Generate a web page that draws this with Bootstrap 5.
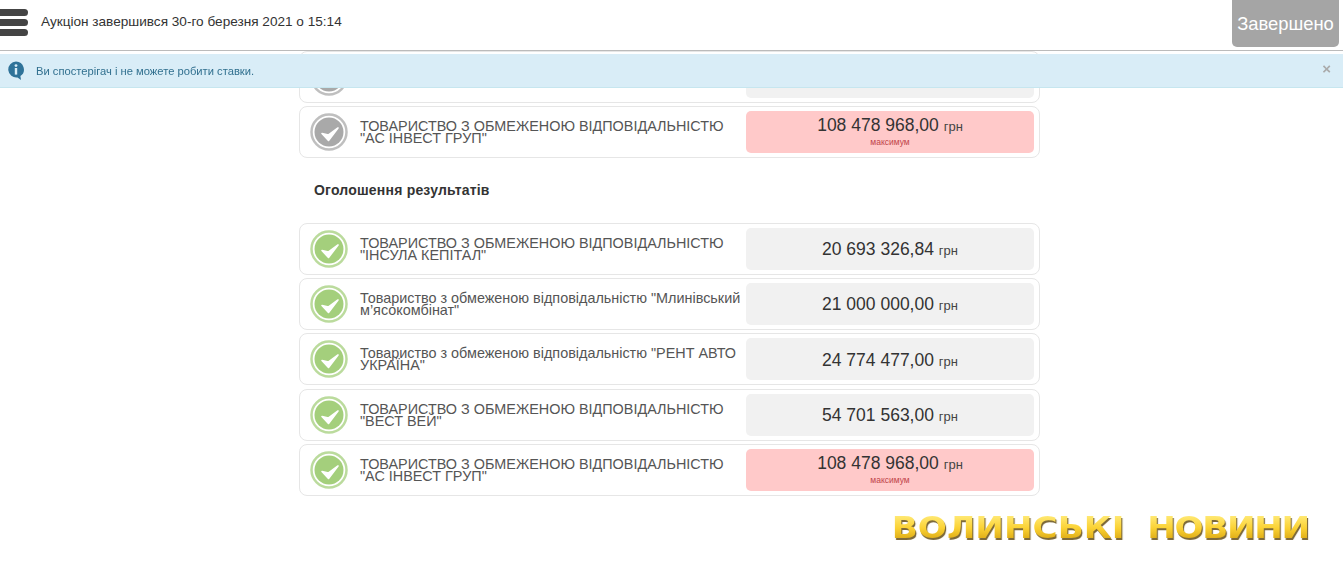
<!DOCTYPE html>
<html lang="uk">
<head>
    <meta charset="UTF-8">
    <meta name="viewport" content="width=device-width, initial-scale=1.0">
    <title>Аукціон</title>
    <link href="https://cdn.jsdelivr.net/npm/bootstrap@5.3.2/dist/css/bootstrap.min.css" rel="stylesheet">
    <style>
        body { font-family: "Liberation Sans", Arial, sans-serif; color: #333; background: #fff; overflow: hidden; padding-right: 4px; }
        .top-bar { position: fixed; top: 0; left: 0; right: 0; height: 51px; background: #fff; border-bottom: 1px solid #bbb; z-index: 20; }
        .burger { width: 28px; padding-top: 9px; align-self: flex-start; }
        .burger span { display: block; height: 6.5px; margin-bottom: 3.5px; background: #444; border-radius: 0 4px 4px 0; }
        .auction-time { font-size: 13.6px; margin-left: 13px; margin-top: -5px; color: #333; }
        .done-btn { width: 107px; height: 47px; margin-right: 4px; padding: 0; align-self: flex-start; background: #a5a5a5; color: #fff; font-size: 18.4px; border: 0; border-radius: 0 0 5px 5px; opacity: 1; }
        .watch-alert { position: fixed; top: 54px; left: 0; right: 0; height: 34px; margin: 0; padding: 0 12px 0 8px; background: #d9edf7; border: 0; border-bottom: 1px solid #c6e6ef; border-radius: 0; color: #31708f; font-size: 11.2px; z-index: 20; }
        .watch-alert .msg { margin-left: 12px; padding-top: 2px; }
        .close-x { color: #aaa; font-size: 15px; font-weight: bold; line-height: 1; margin-top: -4px; }
        .rounds { width: 741px; margin: 0 auto; padding-top: 51px; }
        .bid-row { height: 52px; margin-bottom: 3.33px; padding: 4px 5px 4px 10px; border: 1px solid #e6e6e6; border-radius: 8px; background: #fff; }
        .bid-row .seal { flex: 0 0 38px; width: 38px; height: 38px; }
        .seal-grey { color: #a9a9a9; }
        .seal-green { color: #a4cf7c; }
        .bid-name { width: 386px; margin-left: 12px; font-size: 14.4px; line-height: 12px; color: #555; flex: 0 0 auto; }
        .bid-sum { width: 288px; height: 42px; margin-left: auto; padding-top: 3px; background: #f1f1f1; border-radius: 5px; text-align: center; color: #333; font-size: 17.5px; line-height: 20px; }
        .bid-sum small { font-size: 13px; color: #444; }
        .bid-sum.top-bid { background: #ffc9c9; padding-top: 4px; }
        .bid-sum .mark-max { display: block; font-size: 8.5px; line-height: 10px; color: #c0444a; }
        .stage-title { margin: 0; padding: 18px 0 0 15px; height: 61px; font-size: 14px; font-weight: bold; color: #333; line-height: 20px; letter-spacing: .2px; }
        .logo-line { padding: 12px 30px 0 0; }
        .logo-text { font-family: "DejaVu Sans", sans-serif; font-weight: bold; font-size: 30px; line-height: 34px; word-spacing: 9.6px; transform: scaleX(1.14); transform-origin: right center; background: linear-gradient(#ffe872 15%, #fbd234 50%, #dcaa14 85%); -webkit-background-clip: text; background-clip: text; color: transparent; filter: drop-shadow(1.5px 2px 0 #7d6a3a); }
        .logo-text .last-word { letter-spacing: -1.2px; }
    </style>
</head>
<body>
    <svg width="0" height="0" class="d-block">
        <symbol id="seal" viewBox="0 0 38 38">
            <circle cx="19" cy="19" r="17.5" fill="none" stroke="currentColor" stroke-width="2.5" opacity=".75"/>
            <circle cx="19" cy="19" r="15.2" fill="#fff" opacity=".6"/>
            <circle cx="19" cy="19" r="14.5" fill="currentColor"/>
            <path d="M12 20.5 L18.5 27.5 L28 15 L18.5 22 Z" fill="#fff" stroke="#fff" stroke-width="1.6" stroke-linejoin="round"/>
        </symbol>
    </svg>

    <div class="top-bar d-flex align-items-center">
        <div class="burger"><span></span><span></span><span></span></div>
        <div class="auction-time">Аукціон завершився 30-го березня 2021 о 15:14</div>
        <button class="btn done-btn ms-auto" type="button">Завершено</button>
    </div>

    <div class="alert alert-info watch-alert d-flex align-items-center" role="alert">
        <svg width="16" height="20" viewBox="0 0 16 20">
            <path d="M8 0.5a8 8 0 1 0 1.5 15.9L13 19l-.6-3.9A8 8 0 0 0 8 .5z" fill="#2f7399"/>
            <circle cx="8" cy="4.6" r="1.4" fill="#d9edf7"/>
            <rect x="6.8" y="7" width="2.4" height="6.6" fill="#d9edf7"/>
        </svg>
        <span class="msg">Ви спостерігач і не можете робити ставки.</span>
        <span class="close-x ms-auto">×</span>
    </div>

    <main class="rounds">
        <div class="bid-row d-flex align-items-center">
            <svg class="seal seal-grey"><use href="#seal"/></svg>
            <div class="bid-sum"></div>
        </div>
        <div class="bid-row d-flex align-items-center">
            <svg class="seal seal-grey"><use href="#seal"/></svg>
            <div class="bid-name">ТОВАРИСТВО З ОБМЕЖЕНОЮ ВІДПОВІДАЛЬНІСТЮ "АС ІНВЕСТ ГРУП"</div>
            <div class="bid-sum top-bid">108 478 968,00 <small>грн</small><span class="mark-max">максимум</span></div>
        </div>

        <h6 class="stage-title">Оголошення результатів</h6>

        <div class="bid-row d-flex align-items-center">
            <svg class="seal seal-green"><use href="#seal"/></svg>
            <div class="bid-name">ТОВАРИСТВО З ОБМЕЖЕНОЮ ВІДПОВІДАЛЬНІСТЮ "ІНСУЛА КЕПІТАЛ"</div>
            <div class="bid-sum d-flex align-items-center justify-content-center"><span>20 693 326,84 <small>грн</small></span></div>
        </div>
        <div class="bid-row d-flex align-items-center">
            <svg class="seal seal-green"><use href="#seal"/></svg>
            <div class="bid-name">Товариство з обмеженою відповідальністю "Млинівський м’ясокомбінат"</div>
            <div class="bid-sum d-flex align-items-center justify-content-center"><span>21 000 000,00 <small>грн</small></span></div>
        </div>
        <div class="bid-row d-flex align-items-center">
            <svg class="seal seal-green"><use href="#seal"/></svg>
            <div class="bid-name">Товариство з обмеженою відповідальністю "РЕНТ АВТО УКРАЇНА"</div>
            <div class="bid-sum d-flex align-items-center justify-content-center"><span>24 774 477,00 <small>грн</small></span></div>
        </div>
        <div class="bid-row d-flex align-items-center">
            <svg class="seal seal-green"><use href="#seal"/></svg>
            <div class="bid-name">ТОВАРИСТВО З ОБМЕЖЕНОЮ ВІДПОВІДАЛЬНІСТЮ "ВЕСТ ВЕЙ"</div>
            <div class="bid-sum d-flex align-items-center justify-content-center"><span>54 701 563,00 <small>грн</small></span></div>
        </div>
        <div class="bid-row d-flex align-items-center">
            <svg class="seal seal-green"><use href="#seal"/></svg>
            <div class="bid-name">ТОВАРИСТВО З ОБМЕЖЕНОЮ ВІДПОВІДАЛЬНІСТЮ "АС ІНВЕСТ ГРУП"</div>
            <div class="bid-sum top-bid">108 478 968,00 <small>грн</small><span class="mark-max">максимум</span></div>
        </div>
    </main>

    <div class="logo-line d-flex justify-content-end">
        <div class="logo-text"><span class="first-word">ВОЛИНСЬКІ</span> <span class="last-word">НОВИНИ</span></div>
    </div>

    <script src="https://cdn.jsdelivr.net/npm/bootstrap@5.3.2/dist/js/bootstrap.bundle.min.js"></script>
</body>
</html>
